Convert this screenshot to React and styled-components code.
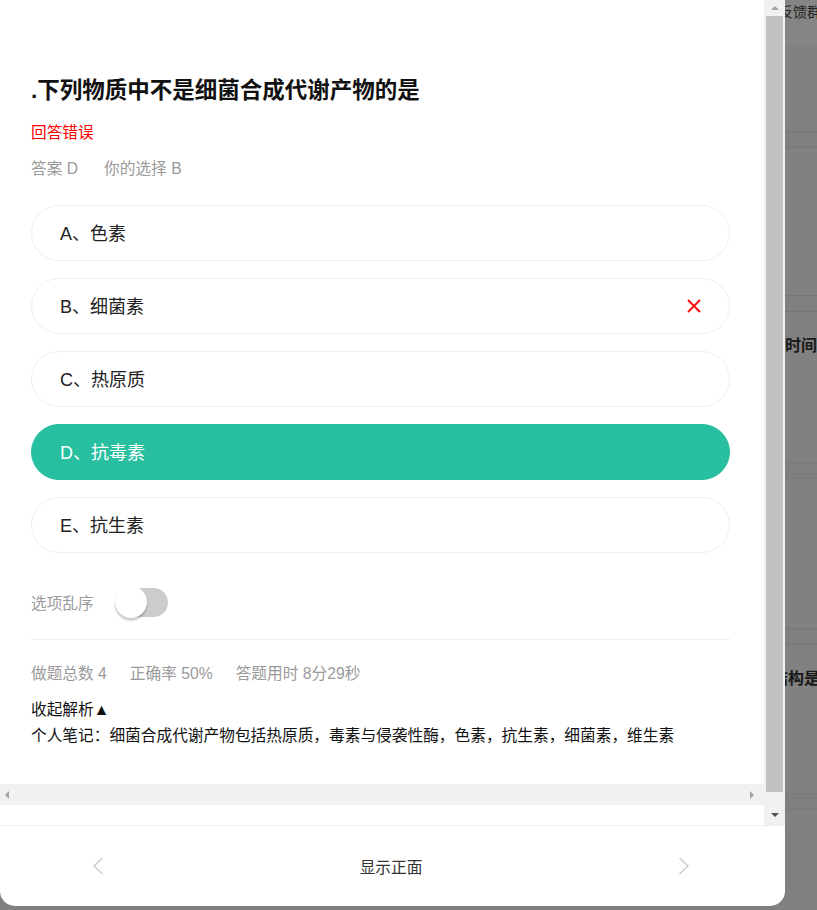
import React from "react";
import styled, { createGlobalStyle } from "styled-components";

const GlobalStyle = createGlobalStyle`
  html, body { margin: 0; padding: 0; }
  body {
    width: 817px;
    height: 910px;
    overflow: hidden;
    font-family: "Liberation Sans", "Noto Sans CJK SC", sans-serif;
    color: #222;
  }
  * { box-sizing: border-box; }
`;

// page behind the dialog
const Screen = styled.div`
  position: relative;
  width: 817px;
  height: 910px;
  overflow: hidden;
  background: #f7f7f7;
`;

const BgHeader = styled.div`
  height: 45px;
  padding: 2px 0 0 779px;
  background: #fff;
  box-shadow: 0 2px 4px rgba(0, 0, 0, 0.08);
  font-size: 14px;
  line-height: 20px;
  color: #444;
  white-space: nowrap;
  overflow: hidden;
`;

const BgItem = styled.div`
  height: ${(p) => p.$h}px;
  padding: 22px 0 0 ${(p) => p.$x || 783}px;
  background: #f7f7f7;
  font-size: 16px;
  font-weight: 700;
  line-height: 24px;
  color: #333;
  white-space: nowrap;
  overflow: hidden;
`;

const BgGap = styled.div`
  height: 17px;
  border-top: 1px solid #e4e4e4;
  border-bottom: 1px solid #e4e4e4;
  background: #f4f4f4;
`;

const Mask = styled.div`
  position: absolute;
  inset: 0;
  z-index: 2;
  background: rgba(0, 0, 0, 0.48);
`;

// dialog
const Dialog = styled.div`
  position: absolute;
  z-index: 3;
  top: 0;
  left: 0;
  width: 785px;
  height: 906px;
  background: #fff;
  border-radius: 0 0 15px 15px;
  overflow: hidden;
  display: flex;
  flex-direction: column;
`;

const ScrollFrame = styled.div`
  height: 825px;
  display: flex;
`;

const ScrollMain = styled.div`
  flex: 1;
  display: flex;
  flex-direction: column;
`;

const Body = styled.div`
  flex: 1;
  padding: 76px 34px 0 31px;
`;

const Title = styled.h2`
  margin: 0;
  font-size: 22.5px;
  font-weight: 700;
  line-height: 30px;
  color: #111;
`;

const Status = styled.div`
  margin-top: 16px;
  font-size: 15.7px;
  line-height: 22px;
  color: #ff0000;
`;

const GrayRow = styled.div`
  display: flex;
  gap: ${(p) => p.$gap || 24}px;
  margin-top: ${(p) => p.$mt}px;
  font-size: 15.7px;
  line-height: 22px;
  color: #9a9a9a;
`;

const OptionList = styled.div`
  display: flex;
  flex-direction: column;
  gap: 17px;
  margin-top: 25px;
`;

const Option = styled.div`
  display: flex;
  align-items: center;
  justify-content: space-between;
  height: 56px;
  padding: 0 27px 0 28px;
  border: 1px solid ${(p) => (p.$correct ? "#27bf9f" : "#eeeeee")};
  border-radius: 28px;
  background: ${(p) => (p.$correct ? "#27bf9f" : "#fff")};
  color: ${(p) => (p.$correct ? "#fff" : "#222")};
  font-size: 18px;
`;

const OptionText = styled.span`
  padding-bottom: 3px;
`;

const ShuffleRow = styled.div`
  display: flex;
  align-items: center;
  height: 32px;
  margin-top: 33px;
  font-size: 15.7px;
  color: #9a9a9a;
`;

const Switch = styled.div`
  position: relative;
  width: 53px;
  height: 29px;
  margin-left: 21px;
  border-radius: 15px;
  background: #cccccc;
`;

const Knob = styled.div`
  position: absolute;
  left: 0;
  top: -1.5px;
  width: 32px;
  height: 32px;
  border-radius: 50%;
  background: #fff;
  box-shadow: 0 3px 1px rgba(0, 0, 0, 0.05), 0 2px 2px rgba(0, 0, 0, 0.1),
    0 3px 3px rgba(0, 0, 0, 0.08);
`;

const Divider = styled.div`
  height: 1px;
  margin-top: 21px;
  background: #eeeeee;
`;

const Analysis = styled.div`
  margin-top: ${(p) => p.$mt}px;
  font-size: 15.7px;
  line-height: 22px;
  color: #111;
  white-space: nowrap;
`;

// fake scroll bars
const HBar = styled.div`
  height: 21px;
  display: flex;
  align-items: center;
  justify-content: space-between;
  padding: 0 10px 0 5px;
  background: #f1f1f1;
`;

const BarSpacer = styled.div`
  height: 20px;
`;

const VBar = styled.div`
  width: 21px;
  display: flex;
  flex-direction: column;
  align-items: center;
  background: #f1f1f1;
`;

const BarButton = styled.div`
  height: ${(p) => p.$h}px;
  display: flex;
  align-items: center;
  justify-content: center;
  margin-top: ${(p) => (p.$end ? "auto" : "0")};
`;

const Thumb = styled.div`
  width: 17px;
  height: 776px;
  background: #c1c1c1;
`;

const Arrow = styled.span`
  width: 0;
  height: 0;
  border: 4px solid transparent;
  ${(p) =>
    p.$dir === "up"
      ? `border-bottom: 4px solid ${p.$c}; border-top-width: 0;`
      : p.$dir === "down"
      ? `border-top: 4px solid ${p.$c}; border-bottom-width: 0;`
      : p.$dir === "left"
      ? `border-right: 4px solid ${p.$c}; border-left-width: 0;`
      : `border-left: 4px solid ${p.$c}; border-right-width: 0;`}
`;

const Footer = styled.div`
  height: 81px;
  display: flex;
  align-items: center;
  justify-content: space-between;
  padding: 0 95px 0 92px;
  border-top: 1px solid #eeeeee;
  font-size: 15.7px;
  color: #333;
`;

const Chevron = ({ right }) => (
  <svg width="12" height="18" viewBox="0 0 12 18">
    <polyline
      points={right ? "1.5,1 10,9 1.5,17" : "10.5,1 2,9 10.5,17"}
      fill="none"
      stroke="#cccccc"
      strokeWidth="1.5"
    />
  </svg>
);

const WrongMark = () => (
  <svg width="16" height="16" viewBox="0 0 16 16">
    <path d="M2 2 L14 14 M14 2 L2 14" stroke="#ff1010" strokeWidth="2" />
  </svg>
);

const options = [
  { key: "A", text: "色素" },
  { key: "B", text: "细菌素", wrong: true },
  { key: "C", text: "热原质" },
  { key: "D", text: "抗毒素", correct: true },
  { key: "E", text: "抗生素" },
];

const App = () => {
  return (
    <Screen>
      <GlobalStyle />
      <BgHeader>反馈群</BgHeader>
      <BgItem $h={86} />
      <BgGap />
      <BgItem $h={147} />
      <BgGap />
      <BgItem $h={150} $x={769}>
        的时间为
      </BgItem>
      <BgGap />
      <BgItem $h={149} />
      <BgGap />
      <BgItem $h={148} $x={772}>
        结构是
      </BgItem>
      <BgGap />
      <BgItem $h={100} />
      <Mask />

      <Dialog>
        <ScrollFrame>
          <ScrollMain>
            <Body>
              <Title>.下列物质中不是细菌合成代谢产物的是</Title>
              <Status>回答错误</Status>
              <GrayRow $mt={14} $gap={26}>
                <span>答案 D</span>
                <span>你的选择 B</span>
              </GrayRow>
              <OptionList>
                {options.map((o) => (
                  <Option key={o.key} $correct={o.correct}>
                    <OptionText>
                      {o.key}、{o.text}
                    </OptionText>
                    {o.wrong && <WrongMark />}
                  </Option>
                ))}
              </OptionList>
              <ShuffleRow>
                选项乱序
                <Switch>
                  <Knob />
                </Switch>
              </ShuffleRow>
              <Divider />
              <GrayRow $mt={23} $gap={23}>
                <span>做题总数 4</span>
                <span>正确率 50%</span>
                <span>答题用时 8分29秒</span>
              </GrayRow>
              <Analysis $mt={14}>收起解析▲</Analysis>
              <Analysis $mt={4}>
                个人笔记：细菌合成代谢产物包括热原质，毒素与侵袭性酶，色素，抗生素，细菌素，维生素
              </Analysis>
            </Body>
            <HBar>
              <Arrow $dir="left" $c="#a3a3a3" />
              <Arrow $dir="right" $c="#a3a3a3" />
            </HBar>
            <BarSpacer />
          </ScrollMain>
          <VBar>
            <BarButton $h={16}>
              <Arrow $dir="up" $c="#a3a3a3" />
            </BarButton>
            <Thumb />
            <BarButton $h={20} $end>
              <Arrow $dir="down" $c="#505050" />
            </BarButton>
          </VBar>
        </ScrollFrame>
        <Footer>
          <Chevron />
          <span>显示正面</span>
          <Chevron right />
        </Footer>
      </Dialog>
    </Screen>
  );
};

export default App;
